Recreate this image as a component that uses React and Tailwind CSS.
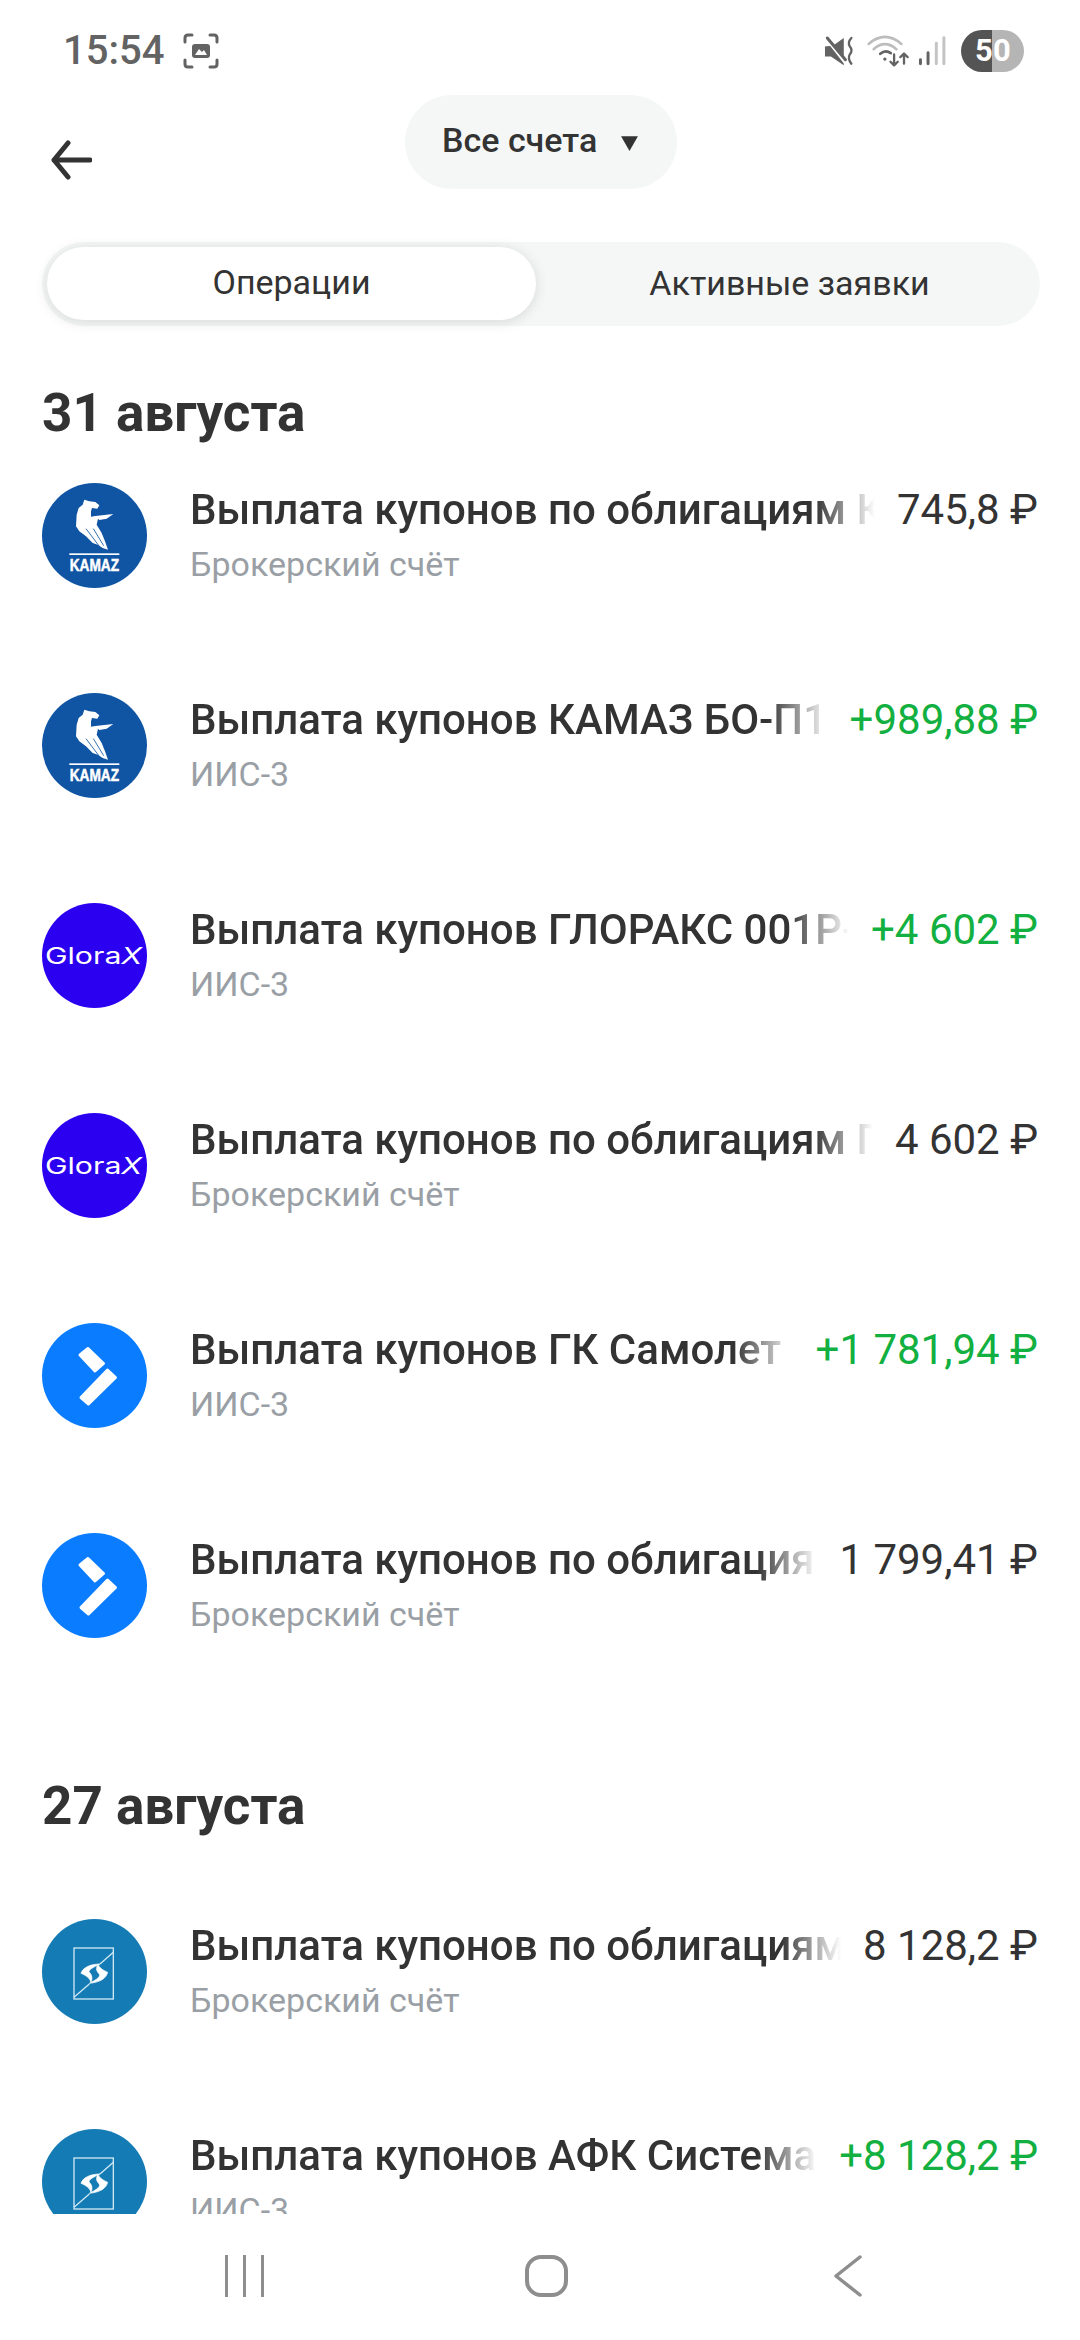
import React from "react";

const font = "font-['Roboto',sans-serif]";

function KamazLogo() {
  return (
    <div className="h-[105px] w-[105px] shrink-0 overflow-hidden rounded-full bg-[#0f55a4]">
      <svg viewBox="18 15 315 315" className="h-full w-full">
        <path fill="white" d="M145 65 L160 70 L178 72 L190 82 L184 92 L168 90 L165 100 L165 116 L178 114 L232 108 L212 122 L190 126 L186 122 L182 140 L197 165 L207 190 L216 215 L200 210 L185 200 L170 195 L150 175 L130 160 L120 145 L122 110 L128 90 L140 80 Z" />
        <path fill="none" stroke="#0f55a4" strokeWidth="2.500" d="M150 152 L190 205 M172 152 L203 203" />
        <rect x="100" y="226" width="150" height="5" fill="white" />
        <text x="175" y="279" textAnchor="middle" textLength="148" lengthAdjust="spacingAndGlyphs" fontSize="48" fontWeight="900" fill="white" stroke="white" strokeWidth="1.500" fontFamily="Liberation Sans, sans-serif">KAMAZ</text>
      </svg>
    </div>
  );
}

function GloraxLogo() {
  return (
    <div className="h-[105px] w-[105px] shrink-0 overflow-hidden rounded-full bg-[#2b00f0]">
      <svg viewBox="18 15 315 315" className="h-full w-full">
        <text x="27" y="197" textLength="291" lengthAdjust="spacingAndGlyphs" fontSize="68" fontWeight="400" fill="white" fontFamily="Inter, sans-serif">Glora<tspan fontStyle="italic">X</tspan></text>
      </svg>
    </div>
  );
}

function SamoletLogo() {
  return (
    <div className="h-[105px] w-[105px] shrink-0 rounded-full bg-[#0a7cff]">
      <svg viewBox="0 0 105 105" className="h-full w-full" fill="white" stroke="white" strokeWidth="3" strokeLinejoin="round">
        <path d="M38 32 L46 25.500 L61.500 40.500 L53 48 Z" />
        <path d="M39 74.500 L65.500 47 L73.500 54.500 L46.500 81 Z" />
      </svg>
    </div>
  );
}

function SistemaLogo() {
  return (
    <div className="h-[105px] w-[105px] shrink-0 overflow-hidden rounded-full bg-[#147bb5]">
      <svg viewBox="18 15 315 315" className="h-full w-full" fill="none">
        <rect x="114" y="102" width="118" height="153" stroke="#cfe8f4" strokeWidth="4" />
        <path d="M114 250 L160 210 M192 150 L232 115" stroke="#cfe8f4" strokeWidth="4" />
        <path fill="white" stroke="white" strokeWidth="2" d="M192 150 C165 150 140 160 135 178 C150 185 160 190 165 205 C172 190 165 180 160 175 C155 168 175 158 192 150 Z" />
        <path fill="white" stroke="white" strokeWidth="2" d="M160 208 C190 205 210 195 215 175 C200 168 190 162 186 150 C178 165 182 172 190 180 C195 190 175 200 160 208 Z" />
      </svg>
    </div>
  );
}

const logos = { kamaz: KamazLogo, glorax: GloraxLogo, samolet: SamoletLogo, sistema: SistemaLogo };

function Row({ logo, title, sub, amount, plus }) {
  const Logo = logos[logo];
  return (
    <div className="flex h-[210px] items-start px-[42px]">
      <Logo />
      <div className="ml-[43px] flex min-w-0 flex-1 flex-col">
        <div className="flex items-start">
          <div className="min-w-0 flex-1 overflow-hidden whitespace-nowrap text-[42px] leading-[54px] font-medium text-[#333333] [mask-image:linear-gradient(to_right,black_calc(100%-60px),transparent)]">
            {title}
          </div>
          <div className={`ml-[22px] shrink-0 text-[42px] leading-[54px] ${plus ? "text-[#12b040]" : "text-[#333333]"}`}>
            {amount}
          </div>
        </div>
        <div className="mt-[5px] text-[34px] leading-[44px] text-[#9a9fa6]">{sub}</div>
      </div>
    </div>
  );
}

function StatusBar() {
  return (
    <div className="flex h-[95px] items-center pl-[63px] pr-[56px] pt-[6px] text-[#636363]">
      <span className="text-[40px] leading-none font-medium">15:54</span>
      <svg viewBox="0 0 36 36" className="ml-[19px] h-[36px] w-[36px]" fill="none" stroke="#636363" strokeWidth="3" strokeLinecap="round">
        <path d="M2 9 V5 Q2 2 5 2 H9 M27 2 H31 Q34 2 34 5 V9 M34 27 V31 Q34 34 31 34 H27 M9 34 H5 Q2 34 2 31 V27" />
        <rect x="9" y="11" width="18" height="14" rx="3" fill="#636363" stroke="none" />
        <path d="M12 22 L16 16 L19 19 L21 17 L24 22 Z" fill="white" stroke="none" />
      </svg>
      <div className="flex-1"></div>
      {/* muted + vibrate */}
      <svg viewBox="185 100 95 100" className="h-[33px] w-[32px]" fill="none" strokeLinecap="round">
        <path d="M190 138 V168 H208 L247 195 V112 L215 135 Z" fill="#636363" />
        <path d="M188 104 L252 186" stroke="white" strokeWidth="12" />
        <path d="M197 112 L252 178" stroke="#636363" strokeWidth="9" />
        <path d="M270 112 Q258 125 265 137 Q276 150 265 162 Q258 174 270 190" stroke="#636363" strokeWidth="7" />
      </svg>
      {/* wifi */}
      <svg viewBox="315 100 130 100" className="ml-[11px] h-[33px] w-[43px]" fill="none" strokeLinecap="round" strokeLinejoin="round">
        <path d="M323 130 Q372 88 422 130" stroke="#bcbcbc" strokeWidth="8" />
        <path d="M338 146 Q372 116 407 146" stroke="#bcbcbc" strokeWidth="8" />
        <path d="M358 160 Q374 146 390 158" stroke="#636363" strokeWidth="8" />
        <circle cx="372" cy="176" r="5" fill="#636363" />
        <path d="M400 162 V194 M389 184 L400 195 L411 184" stroke="#636363" strokeWidth="7" />
        <path d="M430 190 V160 M419 170 L430 159 L441 170" stroke="#636363" strokeWidth="7" />
      </svg>
      {/* signal */}
      <svg viewBox="470 100 90 100" className="ml-[9px] h-[33px] w-[30px]" fill="none" strokeWidth="9" strokeLinecap="round">
        <path d="M477 190 V178 M500 190 V157" stroke="#636363" />
        <path d="M525 190 V128 M548 190 V111" stroke="#c4c4c4" />
      </svg>
      <div className="ml-[13px] flex h-[42px] w-[63px] overflow-hidden rounded-full text-[31px] leading-[42px] font-bold text-white">
        <div className="w-[31px] bg-[#545454] pl-[14px]">5</div>
        <div className="w-[32px] bg-[#b5b5b5] pl-[1px]">0</div>
      </div>
    </div>
  );
}

function Header() {
  return (
    <div className="flex h-[147px] items-start pl-[50px] pr-[42px]">
      <svg viewBox="0 0 42 40" className="mt-[45px] h-[40px] w-[42px]" fill="none" stroke="#333333" strokeWidth="5" strokeLinecap="round" strokeLinejoin="round">
        <path d="M40 20 H4 M18 3 L4 20 L18 37" />
      </svg>
      <div className="ml-[313px] flex h-[94px] w-[272px] items-center rounded-full bg-[#f5f7f7] pb-[4px] pl-[37px]">
        <span className="text-[34px] leading-none font-medium text-[#333333]">Все счета</span>
        <svg viewBox="0 0 18 15" className="ml-[23px] mt-[6px] h-[16px] w-[19px]" fill="#333333">
          <path d="M1 1 H17 L9 15 Z" />
        </svg>
      </div>
    </div>
  );
}

function Tabs() {
  return (
    <div className="ml-[42px] mr-[40px] flex h-[84px] rounded-full bg-[#f5f7f7] p-[5px] text-[34px] leading-none text-[#333333]">
      <div className="flex h-[73px] w-[489px] items-center justify-center rounded-full bg-white pb-[3px] shadow-[0_2px_14px_rgba(0,0,0,0.12)]">Операции</div>
      <div className="flex flex-1 items-center justify-center pb-[3px] pl-[8px]">Активные заявки</div>
    </div>
  );
}

function SectionTitle({ children, className }) {
  return <div className={`px-[42px] text-[53px] leading-[56px] font-bold text-[#333333] ${className}`}>{children}</div>;
}

export default function App() {
  return (
    <div className={`flex h-[2340px] w-[1080px] flex-col overflow-hidden bg-white ${font}`}>
      <StatusBar />
      <Header />
      <Tabs />
      <div className="min-h-0 flex-1 overflow-hidden">
        <SectionTitle className="mt-[59px] mb-[42px]">31 августа</SectionTitle>
        <Row logo="kamaz" title="Выплата купонов по облигациям КАМАЗ БО-П13" sub="Брокерский счёт" amount="745,8 ₽" />
        <Row logo="kamaz" title="Выплата купонов КАМАЗ БО-П13" sub="ИИС-3" amount="+989,88 ₽" plus />
        <Row logo="glorax" title="Выплата купонов ГЛОРАКС 001Р-05" sub="ИИС-3" amount="+4 602 ₽" plus />
        <Row logo="glorax" title="Выплата купонов по облигациям ГЛОРАКС 001Р-05" sub="Брокерский счёт" amount="4 602 ₽" />
        <Row logo="samolet" title="Выплата купонов ГК Самолет БО-П13" sub="ИИС-3" amount="+1 781,94 ₽" plus />
        <Row logo="samolet" title="Выплата купонов по облигациям ГК Самолет БО-П13" sub="Брокерский счёт" amount="1 799,41 ₽" />
        <SectionTitle className="mt-[35px] mb-[85px]">27 августа</SectionTitle>
        <Row logo="sistema" title="Выплата купонов по облигациям АФК Система" sub="Брокерский счёт" amount="8 128,2 ₽" />
        <Row logo="sistema" title="Выплата купонов АФК Система 001Р-05" sub="ИИС-3" amount="+8 128,2 ₽" plus />
      </div>
      <div className="flex h-[126px] shrink-0 items-start bg-white pt-[41px]">
        <div className="ml-[225px] flex h-[42px] w-[39px] justify-between">
          <div className="w-[3px] bg-[#8e8e8e]"></div>
          <div className="w-[3px] bg-[#8e8e8e]"></div>
          <div className="w-[3px] bg-[#8e8e8e]"></div>
        </div>
        <div className="ml-[261px] h-[42px] w-[43px] rounded-[16px] border-[4px] border-[#8e8e8e]"></div>
        <svg viewBox="0 0 28 42" className="ml-[266px] h-[42px] w-[28px]" fill="none" stroke="#8e8e8e" strokeWidth="3.500" strokeLinecap="round" strokeLinejoin="round">
          <path d="M26 2 L2 21 L26 40" />
        </svg>
      </div>
    </div>
  );
}
